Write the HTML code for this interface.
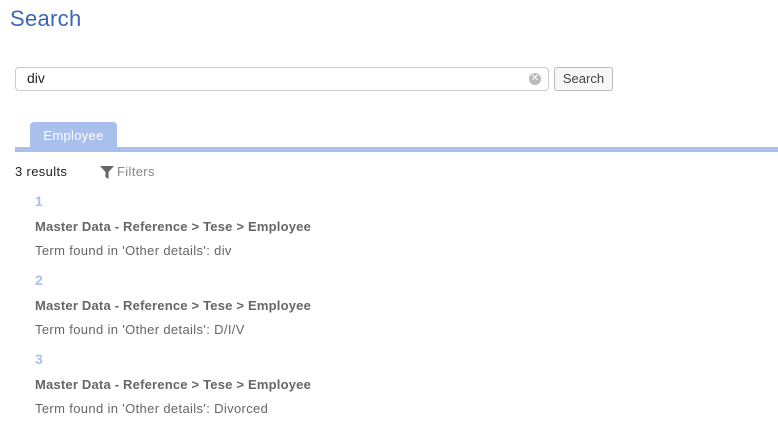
<!DOCTYPE html>
<html><head><style>
body{margin:0;width:778px;height:439px;background:#fff;font-family:"Liberation Sans",sans-serif;position:relative;overflow:hidden}
.a{position:absolute;white-space:nowrap}
.t{letter-spacing:0.35px}
.b{letter-spacing:0.2px}
</style></head><body>
<div class="a" style="left:10px;top:6px;font-size:22px;color:#3a66b8;letter-spacing:0.3px">Search</div>
<div class="a" style="left:15px;top:67px;width:532px;height:22px;border:1px solid #ccc;border-radius:4px;"></div>
<div class="a" style="left:27px;top:70px;font-size:14px;color:#222;">div</div>
<div class="a" style="left:529px;top:73px;width:12px;height:12px;border-radius:50%;background:#bbb;color:#fff;font-size:10px;line-height:12px;text-align:center;">✕</div>
<div class="a" style="left:554px;top:67px;width:57px;height:22px;border:1px solid #bbb;border-radius:3px;background:#f7f7f7;font-size:13px;color:#444;text-align:center;line-height:22px;">Search</div>
<div class="a" style="left:30px;top:122px;width:87px;height:26px;background:#a9c0ec;border-radius:4px 4px 0 0;color:#fff;font-size:13px;text-align:center;line-height:28px;letter-spacing:0.3px">Employee</div>
<div class="a" style="left:15px;top:147px;width:763px;height:5px;background:#a9c0ec;"></div>
<div class="a t" style="left:15px;top:164px;font-size:13px;color:#222;">3 results</div>
<svg class="a" style="left:100px;top:166px" width="14" height="13"><path d="M0 0H14L8.5 6V13L5.5 11V6Z" fill="#666"/></svg>
<div class="a t" style="left:117px;top:164px;font-size:13px;color:#888;">Filters</div>
<div class="a" style="left:35px;top:193px;font-size:14px;font-weight:bold;color:#a9c0ec;">1</div>
<div class="a b" style="left:35px;top:219px;font-size:13px;font-weight:bold;color:#666;">Master Data - Reference &gt; Tese &gt; Employee</div>
<div class="a t" style="left:35px;top:243px;font-size:13px;color:#666;">Term found in 'Other details': div</div>
<div class="a" style="left:35px;top:272px;font-size:14px;font-weight:bold;color:#a9c0ec;">2</div>
<div class="a b" style="left:35px;top:298px;font-size:13px;font-weight:bold;color:#666;">Master Data - Reference &gt; Tese &gt; Employee</div>
<div class="a t" style="left:35px;top:322px;font-size:13px;color:#666;">Term found in 'Other details': D/I/V</div>
<div class="a" style="left:35px;top:351px;font-size:14px;font-weight:bold;color:#a9c0ec;">3</div>
<div class="a b" style="left:35px;top:377px;font-size:13px;font-weight:bold;color:#666;">Master Data - Reference &gt; Tese &gt; Employee</div>
<div class="a t" style="left:35px;top:401px;font-size:13px;color:#666;">Term found in 'Other details': Divorced</div>
</body></html>
